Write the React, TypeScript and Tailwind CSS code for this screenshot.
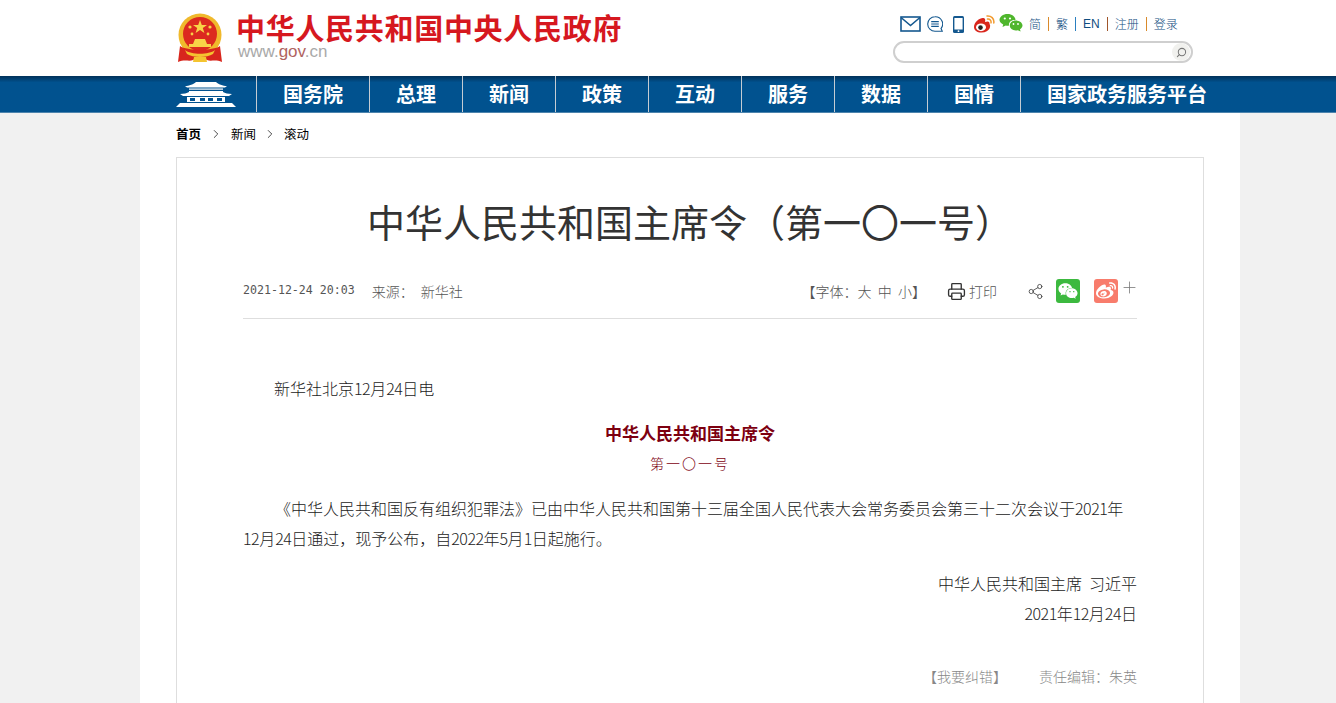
import { Printer, Share2, Plus, Search, ChevronRight } from 'lucide-react';
import { FaWeibo, FaWeixin } from 'react-icons/fa';

const navItems = ['国务院', '总理', '新闻', '政策', '互动', '服务', '数据', '国情', '国家政务服务平台'];
const cjk = "font-['Noto_Sans_CJK_SC',sans-serif]";

const Emblem = () => (
    <svg width="46" height="50" viewBox="0 0 46 50">
        <circle cx="23" cy="22" r="21.5" fill="#f0b92c" />
        <circle cx="23" cy="21" r="17" fill="#dc2a1f" />
        <polygon points="23,7 24.8,12 30,12 25.8,15 27.4,20 23,17 18.6,20 20.2,15 16,12 21.2,12" fill="#f8d347" />
        <circle cx="13" cy="14" r="1.6" fill="#f8d347" />
        <circle cx="33" cy="14" r="1.6" fill="#f8d347" />
        <circle cx="15" cy="21" r="1.4" fill="#f8d347" />
        <circle cx="31" cy="21" r="1.4" fill="#f8d347" />
        <path d="M16 31 L18 26 H28 L30 31 Z" fill="#f8d347" />
        <rect x="12" y="31" width="22" height="3" fill="#f8d347" />
        <path d="M3 33 C10 38 36 38 43 33 L45 49 C38 46 34 49 30 47 L23 44 L16 47 C12 49 8 46 1 49 Z" fill="#d8261d" />
        <path d="M8 37 C14 42 32 42 38 37 L36 41 C30 45 16 45 10 41 Z" fill="#f4c430" />
        <path d="M17 44 H29 L30 49 H16 Z" fill="#f4c430" />
    </svg>
);

const Palace = () => (
    <svg width="62" height="26" viewBox="0 0 62 26" fill="#fff">
        <path d="M10 5 C14 5 19 3 21 1 H41 C43 3 48 5 52 5 L50 6.5 H12 Z" />
        <rect x="14" y="7.5" width="34" height="1.2" />
        <rect x="14" y="10" width="34" height="1" />
        <path d="M5 13 C9 13 12 12 14 11 H48 C50 12 53 13 57 13 L54 15 H8 Z" />
        <path d="M12 16 H50 V21 H12 Z M15 17 V20 H20 V17 Z M25 17 V20 H30 V17 Z M33 17 V20 H38 V17 Z M42 17 V20 H47 V17 Z" fillRule="evenodd" />
        <path d="M5 22 H57 L61 26 H1 Z" />
    </svg>
);

const Mail = () => (
    <svg width="21" height="16" viewBox="0 0 21 16" fill="none" stroke="#14588f" strokeWidth="1.6">
        <rect x="1" y="1" width="19" height="14" />
        <path d="M1 1.5 L10.5 9.5 L20 1.5" />
    </svg>
);

const Chat = () => (
    <svg width="16" height="16" viewBox="0 0 16 16" fill="none" stroke="#14588f" strokeWidth="1.1">
        <path d="M8 .7 A7.3 7.3 0 1 0 8 15.3 H15.3 L14 12.6 A7.3 7.3 0 0 0 8 .7 Z" />
        <path d="M4.2 5.6 H11.8 M4.2 8 H11.8 M4.2 10.4 H11.8" />
    </svg>
);

const Phone = () => (
    <svg width="11" height="17" viewBox="0 0 11 17">
        <rect width="11" height="17" rx="1.5" fill="#14588f" />
        <rect x="1.4" y="2" width="8.2" height="11.5" fill="#fff" />
        <circle cx="5.5" cy="15.2" r="0.9" fill="#fff" />
    </svg>
);

const WeiboColor = () => (
    <svg width="22" height="18" viewBox="0 0 22 18" fill="none">
        <path d="M1 12 C1 7 7 2.500 10.500 3 C12.500 3.300 12.500 5.500 12 7 C15 5.800 17 6.500 16.500 9 C18 10 17.500 17.500 8.500 17.500 C4 17.500 1 15.500 1 12 Z" fill="#d9261c" />
        <ellipse cx="8" cy="12.300" rx="5" ry="3.900" fill="#fff" />
        <circle cx="7.500" cy="12.600" r="2.300" fill="#222" />
        <path d="M14 1 C18 .5 21.500 3.500 20.800 8 M14.500 4 C16.800 3.600 18.500 5.500 18 7.800" stroke="#f29a2e" strokeWidth="1.500" strokeLinecap="round" />
    </svg>
);

const WechatColor = () => (
    <svg width="24" height="18" viewBox="0 0 24 18" fill="#4fb62c">
        <path d="M8.500 0 C13 0 16.500 2.700 16.500 6 C12.500 5.500 9.500 8 10 11.500 C9.300 11.800 8 11.800 6.800 11.500 L3.500 13 L4.200 10.500 C2 9.300 .5 7.800 .5 6 C.5 2.700 4 0 8.500 0 Z" />
        <path d="M16.500 6.500 C20.500 6.500 23.500 8.800 23.500 11.500 C23.500 13 22.500 14.300 21 15.200 L21.600 17.500 L18.800 16.200 C14.500 17.300 10.800 14.800 10.800 11.500 C10.800 8.800 13.300 6.500 16.500 6.500 Z" />
        <circle cx="5.800" cy="4.500" r="1.100" fill="#fff" />
        <circle cx="11" cy="4.500" r="1.100" fill="#fff" />
        <circle cx="14.500" cy="10" r=".9" fill="#fff" />
        <circle cx="19" cy="10" r=".9" fill="#fff" />
    </svg>
);

const Sep = ({ color }: { color: string }) => <span className={`w-px h-[14px] block ${color}`} />;
const Num = ({ children }: { children: string }) => <span className="tracking-[-0.5px]">{children}</span>;

export default function App() {
    return (
        <div className={`h-[703px] overflow-hidden bg-[#f1f1f1] ${cjk}`}>
            <header className="bg-white h-[76px]">
                <div className="w-[1028px] ml-[176px] flex justify-between">
                    <div className="flex">
                        <div className="mt-[13px] ml-px"><Emblem /></div>
                        <div className="ml-[13px]">
                            <div className="text-[29px] leading-[30px] mt-[12px] font-bold text-[#d6181f] tracking-[0.7px] whitespace-nowrap">中华人民共和国中央人民政府</div>
                            <div className="font-['Liberation_Sans',sans-serif] text-[17px] leading-[18px] mt-[1px] ml-[2px] text-[#a9a9a9]">www.<span className="text-[#b0635f]">gov</span>.cn</div>
                        </div>
                    </div>
                    <div className="w-[300px] mr-[11px] pt-[14px]">
                        <div className="flex items-center h-[20px] ml-[7px]">
                            <Mail />
                            <span className="ml-[6px]"><Chat /></span>
                            <span className="ml-[10px]"><Phone /></span>
                            <span className="ml-[9px]"><WeiboColor /></span>
                            <span className="ml-[4px] -mt-[2px]"><WechatColor /></span>
                            <div className="flex items-center ml-[6px] text-[12px] text-[#0f4d80] whitespace-nowrap font-light">
                                <span>简</span>
                                <span className="mx-[7px]"><Sep color="bg-[#d98a2b]" /></span>
                                <span>繁</span>
                                <span className="mx-[7px]"><Sep color="bg-[#2a7fc0]" /></span>
                                <span className="font-['Liberation_Sans',sans-serif]">EN</span>
                                <span className="mx-[7px]"><Sep color="bg-[#a0562b]" /></span>
                                <span>注册</span>
                                <span className="mx-[7px]"><Sep color="bg-[#d98a2b]" /></span>
                                <span>登录</span>
                            </div>
                        </div>
                        <div className="mt-[7px] h-[22px] border-2 border-[#cfcfcf] rounded-full flex items-center justify-end pr-px">
                            <span className="w-[18px] h-[18px] rounded-full bg-[#f1f1ee] flex items-center justify-center">
                                <Search size={11} strokeWidth={2.200} color="#777" className="-scale-x-100" />
                            </span>
                        </div>
                    </div>
                </div>
            </header>

            <nav className="h-[37px] bg-[#01528f] bg-gradient-to-b from-[#01325a] to-[#01528f] to-[18%] border-b border-b-[#4d84ad]">
                <div className="ml-[176px] flex h-full">
                    <div className="w-[81px] -ml-px flex items-center pb-px"><Palace /></div>
                    {navItems.map((item) => (
                        <div key={item} className="border-l border-l-[#c5ccd3] px-[26px] flex items-center text-white text-[20px] font-bold whitespace-nowrap">
                            {item}
                        </div>
                    ))}
                </div>
            </nav>

            <main className="w-[1100px] ml-[140px] bg-white px-[36px] h-[590px]">
                <div className="flex items-center h-[44px] pb-[2px] text-[12.500px] text-[#000] font-normal">
                    <span className="font-bold">首页</span>
                    <ChevronRight size={14} strokeWidth={1.200} className="mx-[8px]" />
                    <span>新闻</span>
                    <ChevronRight size={14} strokeWidth={1.200} className="mx-[7px]" />
                    <span>滚动</span>
                </div>
                <article className="border border-[#dedede] h-[700px] px-[66px]">
                    <h1 className="text-[38px] leading-[56px] mt-[35px] text-center font-normal text-[#333]">中华人民共和国主席令（第一〇一号）</h1>
                    <div className="mt-[25px] h-[45px] pb-[10px] flex items-center justify-between border-b border-b-[#dedede] text-[14px] text-[#555] font-light">
                        <div className="flex items-center">
                            <span className="font-['DejaVu_Sans_Mono',monospace] text-[11.600px] whitespace-pre">2021-12-24 20:03</span>
                            <span className="ml-[17px]">来源：</span>
                            <span className="ml-[7px]">新华社</span>
                        </div>
                        <div className="flex items-center">
                            <span className="whitespace-pre">【字体：大  中  小】</span>
                            <Printer size={19} strokeWidth={1.700} color="#333" className="ml-[21px]" />
                            <span className="ml-[3px]">打印</span>
                            <Share2 size={17} strokeWidth={1.200} color="#444" className="ml-[30px]" />
                            <span className="ml-[12px] w-[24px] h-[24px] bg-[#3cb93f] rounded-[3px] flex items-center justify-center"><FaWeixin size={20} color="#fff" /></span>
                            <span className="ml-[14px] w-[24px] h-[24px] bg-[#f87c6c] rounded-[3px] flex items-center justify-center"><FaWeibo size={20} color="#fff" /></span>
                            <Plus size={19} strokeWidth={1} color="#777" className="ml-[2px] -mr-[2px] -mt-[7px]" />
                        </div>
                    </div>
                    <div className="text-[16px] leading-[30px] text-[#222] font-light mt-[54px]">
                        <p className="indent-[31px]">新华社北京<Num>12</Num>月<Num>24</Num>日电</p>
                        <p className="text-center text-[17px] font-bold text-[#7d0010] mt-[15px]">中华人民共和国主席令</p>
                        <p className="text-center text-[14px] text-[#7d0010] tracking-[2px]">第一〇一号</p>
                        <p className="indent-[32px] mt-[15px]">《中华人民共和国反有组织犯罪法》已由中华人民共和国第十三届全国人民代表大会常务委员会第三十二次会议于<Num>2021</Num>年<Num>12</Num>月<Num>24</Num>日通过，现予公布，自<Num>2022</Num>年<Num>5</Num>月<Num>1</Num>日起施行。</p>
                        <p className="text-right mt-[15px] whitespace-pre">中华人民共和国主席  习近平</p>
                        <p className="text-right"><Num>2021</Num>年<Num>12</Num>月<Num>24</Num>日</p>
                    </div>
                    <div className="mt-[38px] flex justify-end text-[14px] text-[#888] font-light">
                        <span>【我要纠错】</span>
                        <span className="ml-[32px]">责任编辑：朱英</span>
                    </div>
                </article>
            </main>
        </div>
    );
}
